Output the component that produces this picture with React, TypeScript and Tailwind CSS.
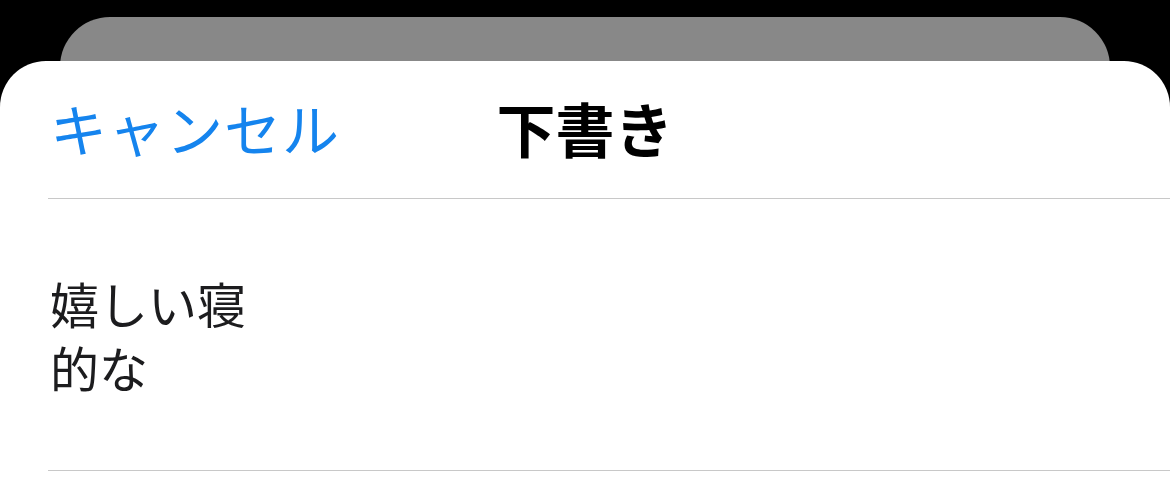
import React from 'react';

const font = { fontFamily: '"Noto Sans CJK JP", "Noto Sans", sans-serif' };

export default function App() {
  return (
    <div className="h-[503px] w-full overflow-hidden bg-black" style={font}>
      {/* card behind the sheet */}
      <div className="mx-[60px] mt-[17px] h-[90px] rounded-t-[50px] bg-[#888888]" />

      {/* sheet */}
      <div className="relative -mt-[46px] h-[460px] rounded-t-[46px] bg-white">
        <div className="ml-[48px] grid h-[138px] grid-cols-[minmax(0,1fr)_auto_minmax(0,1fr)] items-center border-b border-[#c8c8c8] pb-[4px] pr-[48px]">
          <button className="justify-self-start whitespace-nowrap pl-[2px] text-[57px] leading-none tracking-[1px] text-[#1584ee]">
            キャンセル
          </button>
          <h1 className="text-[59px] font-bold leading-none text-black">下書き</h1>
          <div />
        </div>

        <div className="ml-[48px] flex h-[272px] items-center border-b border-[#c8c8c8]">
          <p className="w-[220px] pl-[2px] text-[49px] leading-[64px] text-[#1c1c1e]">
            嬉しい寝的な
          </p>
        </div>
      </div>
    </div>
  );
}
